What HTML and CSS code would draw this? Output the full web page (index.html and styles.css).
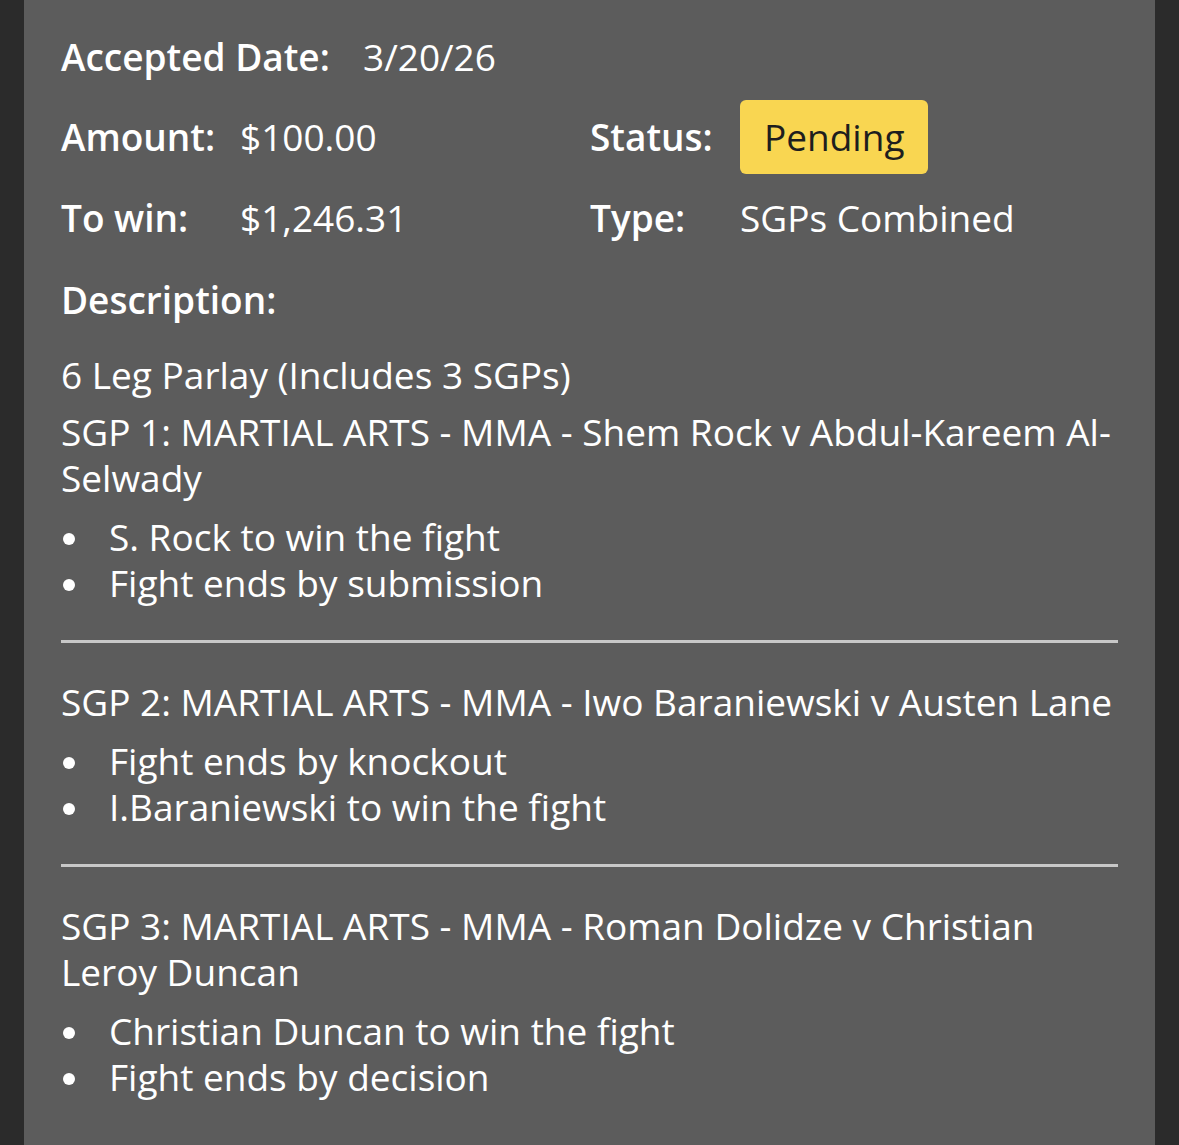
FILE: index.html
```html
<!DOCTYPE html>
<html>
<head>
<meta charset="utf-8">
<link rel="stylesheet" href="styles.css">
</head>
<body>
<div class="panel">
  <div class="row row-date">
    <span class="label date-label">Accepted Date:</span>
    <span class="value">3/20/26</span>
  </div>
  <div class="row row-amount">
    <span class="label col1">Amount:</span>
    <span class="value col2">$100.00</span>
    <span class="label col3">Status:</span>
    <span class="badge">Pending</span>
  </div>
  <div class="row row-win">
    <span class="label col1">To win:</span>
    <span class="value col2">$1,246.31</span>
    <span class="label col3">Type:</span>
    <span class="value">SGPs Combined</span>
  </div>
  <div class="label desc-label">Description:</div>
  <div class="parlay">6 Leg Parlay (Includes 3 SGPs)</div>

  <div class="sgp sgp-first">
    <div class="sgp-title">SGP 1: MARTIAL ARTS - MMA - Shem Rock v Abdul-Kareem Al-Selwady</div>
    <ul class="legs">
      <li>S. Rock to win the fight</li>
      <li>Fight ends by submission</li>
    </ul>
  </div>
  <div class="sep"></div>
  <div class="sgp">
    <div class="sgp-title">SGP 2: MARTIAL ARTS - MMA - Iwo Baraniewski v Austen Lane</div>
    <ul class="legs">
      <li>Fight ends by knockout</li>
      <li>I.Baraniewski to win the fight</li>
    </ul>
  </div>
  <div class="sep"></div>
  <div class="sgp">
    <div class="sgp-title">SGP 3: MARTIAL ARTS - MMA - Roman Dolidze v Christian Leroy Duncan</div>
    <ul class="legs">
      <li>Christian Duncan to win the fight</li>
      <li>Fight ends by decision</li>
    </ul>
  </div>
</div>
</body>
</html>
```

FILE: styles.css
```css
html, body {
  margin: 0;
  padding: 0;
  background: #2b2b2b;
  height: 100%;
}
body {
  font-family: "Open Sans", "Liberation Sans", sans-serif;
  font-size: 37px;
  line-height: 46px;
  color: #ffffff;
  overflow: hidden;
}
.panel {
  margin: 0 24px 0 24px;
  background: #5c5c5c;
  min-height: 100%;
  padding: 34px 37px 0 37px;
  box-sizing: border-box;
}
.label {
  font-weight: 600;
}
.row {
  display: flex;
  align-items: center;
}
.date-label {
  width: 302px;
}
.row-amount {
  margin-top: 20px;
  height: 74px;
}
.row-win {
  margin-top: 21px;
}
.col1 { width: 179px; flex: none; }
.col2 { width: 350px; flex: none; }
.col3 { width: 150px; flex: none; }
.badge {
  background: #f9d651;
  color: #1e1e1e;
  height: 74px;
  line-height: 74px;
  padding: 0 24px;
  border-radius: 6px;
  box-sizing: border-box;
}
.desc-label {
  margin-top: 36px;
}
.parlay {
  margin-top: 29px;
}
.sgp-first {
  margin-top: 11px;
}
.legs {
  list-style: none;
  margin: 13px 0 0 0;
  padding: 0;
}
.legs li {
  position: relative;
  padding-left: 48px;
}
.legs li::before {
  content: "";
  position: absolute;
  left: 2px;
  top: 19px;
  width: 12px;
  height: 12px;
  border-radius: 50%;
  background: #ffffff;
}
.sep {
  height: 3px;
  background: #c8c8c8;
  margin: 34px 0 36px 0;
}
```
